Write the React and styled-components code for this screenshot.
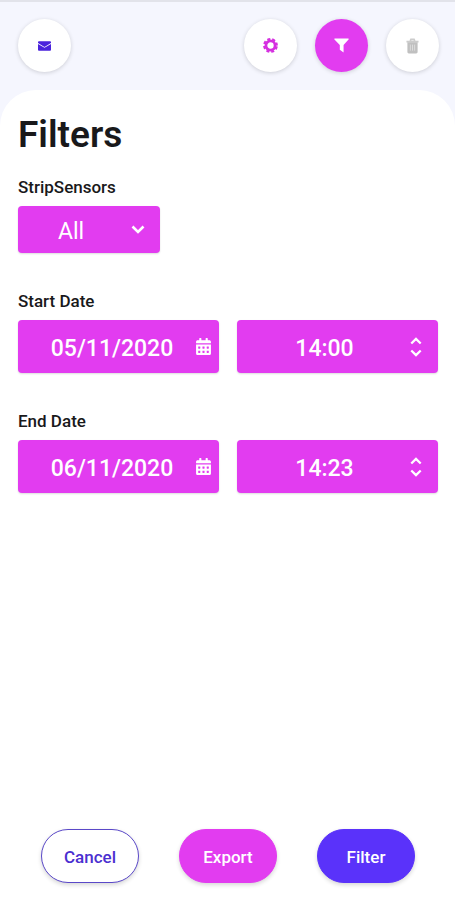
import React, { useState } from "react";
import styled, { createGlobalStyle } from "styled-components";
import { FaCalendarAlt } from "react-icons/fa";

const MAGENTA = "#e23cf0";
const INDIGO = "#5a32fa";
const INK = "#19191b";

const EnvelopeIcon = () => (
    <svg width="13" height="10" viewBox="0 0 14 10" aria-hidden="true">
        <path d="M1 0h12a1 1 0 0 1 1 1v.8L7 6 0 1.800V1a1 1 0 0 1 1-1z" fill="#4a22dc" />
        <path d="M0 2.800 7 7l7-4.200V9a1 1 0 0 1-1 1H1a1 1 0 0 1-1-1z" fill="#4a22dc" />
    </svg>
);

const GearIcon = () => (
    <svg width="15" height="15" viewBox="0 0 16 16" fill="none" stroke="#d52fe0" aria-hidden="true">
        <circle cx="8" cy="8" r="4.900" strokeWidth="3" />
        <circle cx="8" cy="8" r="6.800" strokeWidth="2.200" strokeDasharray="3.200 2.141" strokeDashoffset="-1.070" />
    </svg>
);

const FunnelIcon = () => (
    <svg width="15" height="15" viewBox="0 0 16 16" fill="#ffffff" aria-hidden="true">
        <path d="M.8.500h14.400q.9.300.3 1.200L10.200 7.500v8L6.200 12.600V7.500L.5 1.700Q-.1.800.8.500z" />
    </svg>
);

const TrashIcon = () => (
    <svg width="13" height="16" viewBox="0 0 14 17" fill="none" aria-hidden="true">
        <path d="M.5 3.800h13M4.600 3 5.300 1.300h3.400L9.400 3" stroke="#cccccc" strokeWidth="1.800" />
        <path d="M1.500 4.500h11V15q0 1.500-1.500 1.500H3q-1.500 0-1.500-1.500z" fill="#c0c0c0" />
        <path d="M4.700 7v6.500M7 7v6.500M9.300 7v6.500" stroke="#dedede" />
    </svg>
);

const Chevron = ({ width, height, up }) => (
    <svg width={width} height={height} viewBox="0 0 14 9" fill="none" aria-hidden="true">
        <path d={up ? "M1.500 7.500 7 2l5.500 5.500" : "M1.500 1.500 7 7l5.500-5.500"} stroke="#fff" strokeWidth="2.600" />
    </svg>
);

const DateTimeRow = ({ id, label, date, time }) => {
    const [day, setDay] = useState(date);
    const [hour, setHour] = useState(time);

    const shift = (step) => {
        const [h, m] = hour.split(":").map(Number);
        const total = (h * 60 + m + step + 1440) % 1440;
        const pad = (n) => String(n).padStart(2, "0");
        setHour(`${pad(Math.floor(total / 60))}:${pad(total % 60)}`);
    };

    return (
        <Group>
            <Label htmlFor={id}>{label}</Label>
            <Row>
                <Field $pad="0 8px 0 10px">
                    <FieldInput id={id} value={day} onChange={(e) => setDay(e.target.value)} />
                    <CalendarIcon aria-hidden="true" />
                </Field>
                <Field $pad="0 16px 0 2px">
                    <FieldInput
                        aria-label={`${label} time`}
                        value={hour}
                        onChange={(e) => setHour(e.target.value)}
                    />
                    <Stepper>
                        <StepButton aria-label="Later" onClick={() => shift(1)}>
                            <Chevron width={12} height={8} up />
                        </StepButton>
                        <StepButton aria-label="Earlier" onClick={() => shift(-1)}>
                            <Chevron width={12} height={8} />
                        </StepButton>
                    </Stepper>
                </Field>
            </Row>
        </Group>
    );
};

const App = () => (
    <>
        <GlobalStyle />
        <Page>
            <TopBar>
                <RoundButton aria-label="Messages"><EnvelopeIcon /></RoundButton>
                <Tools>
                    <RoundButton aria-label="Settings"><GearIcon /></RoundButton>
                    <RoundButton aria-label="Filters" $active><FunnelIcon /></RoundButton>
                    <RoundButton aria-label="Delete"><TrashIcon /></RoundButton>
                </Tools>
            </TopBar>
            <Sheet>
                <Title>Filters</Title>
                <Form>
                    <Group>
                        <Label htmlFor="sensors">StripSensors</Label>
                        <SelectBox>
                            <Select id="sensors" defaultValue="all">
                                <option value="all">All</option>
                            </Select>
                            <Caret><Chevron width={14} height={9} /></Caret>
                        </SelectBox>
                    </Group>
                    <DateTimeRow id="start" label="Start Date" date="05/11/2020" time="14:00" />
                    <DateTimeRow id="end" label="End Date" date="06/11/2020" time="14:23" />
                </Form>
                <Actions>
                    <ActionButton $bg="#ffffff" $color="#4a2fd0" $border="#5a48c8">Cancel</ActionButton>
                    <ActionButton $bg={MAGENTA} $color="#ffffff" $border={MAGENTA}>Export</ActionButton>
                    <ActionButton $bg={INDIGO} $color="#ffffff" $border={INDIGO}>Filter</ActionButton>
                </Actions>
            </Sheet>
        </Page>
    </>
);

const GlobalStyle = createGlobalStyle`
  * {
    box-sizing: border-box;
  }

  body {
    margin: 0;
    background: #f5f6fe;
    color: ${INK};
    font-family: Roboto, "Liberation Sans", sans-serif;
  }

  button, input, select {
    font-family: inherit;
  }

  svg {
    display: block;
    flex: none;
  }
`;

const Page = styled.div`
  display: flex;
  flex-direction: column;
  min-height: 100vh;
  border-top: 2px solid #e2e3ea;
`;

const TopBar = styled.header`
  display: flex;
  justify-content: space-between;
  padding: 17px 16px 18px 18px;
`;

const Tools = styled.div`
  display: flex;
  gap: 18px;
`;

const RoundButton = styled.button`
  display: flex;
  align-items: center;
  justify-content: center;
  width: 53px;
  height: 53px;
  padding: 0;
  border: none;
  border-radius: 50%;
  background: ${(p) => (p.$active ? MAGENTA : "#ffffff")};
  box-shadow: 0 1px 4px rgba(0, 0, 0, 0.16);
  cursor: pointer;
`;

const Sheet = styled.main`
  display: flex;
  flex-direction: column;
  flex: 1;
  padding: 23px 17px 17px 18px;
  border-radius: 36px 36px 0 0;
  background: #ffffff;
`;

const Title = styled.h1`
  margin: 0;
  font-size: 37px;
  font-weight: 600;
  line-height: 44px;
`;

const Form = styled.div`
  display: flex;
  flex-direction: column;
  flex: 1;
  padding-top: 20px;
`;

const Group = styled.div`
  display: flex;
  flex-direction: column;
  gap: 9px;

  & + & {
    margin-top: 38px;
  }
`;

const Label = styled.label`
  font-size: 17px;
  font-weight: 500;
  line-height: 20px;
`;

const Row = styled.div`
  display: grid;
  grid-template-columns: repeat(2, minmax(0, 1fr));
  gap: 18px;
`;

const Field = styled.div`
  display: flex;
  align-items: center;
  height: 53px;
  padding: ${(p) => p.$pad};
  border-radius: 4px;
  background: ${MAGENTA};
  box-shadow: 0 1px 2px rgba(0, 0, 0, 0.14);
`;

const FieldInput = styled.input`
  flex: 1;
  min-width: 0;
  height: 100%;
  padding: 3px 0 0;
  border: none;
  background: none;
  color: #ffffff;
  font-size: 23px;
  font-weight: 500;
  text-align: center;
`;

const CalendarIcon = styled(FaCalendarAlt)`
  width: 15px;
  height: 17px;
  color: #ffffff;
`;

const Stepper = styled.div`
  display: flex;
  flex-direction: column;
  gap: 4px;
`;

const StepButton = styled.button`
  padding: 0;
  border: none;
  background: none;
  cursor: pointer;
`;

const SelectBox = styled.div`
  position: relative;
  width: 142px;
`;

const Select = styled.select`
  display: block;
  width: 100%;
  height: 47px;
  padding: 3px 36px 0 0;
  border: none;
  border-radius: 4px;
  appearance: none;
  background: ${MAGENTA};
  box-shadow: 0 1px 2px rgba(0, 0, 0, 0.14);
  color: #ffffff;
  font-size: 23px;
  text-align: center;
  text-align-last: center;
`;

const Caret = styled.span`
  position: absolute;
  top: 0;
  right: 15px;
  bottom: 0;
  display: flex;
  align-items: center;
  pointer-events: none;
`;

const Actions = styled.div`
  display: flex;
  justify-content: center;
  gap: 40px;
`;

const ActionButton = styled.button`
  width: 98px;
  height: 54px;
  padding: 2px 0 0;
  border: 1px solid ${(p) => p.$border};
  border-radius: 27px;
  background: ${(p) => p.$bg};
  box-shadow: 0 2px 4px rgba(0, 0, 0, 0.16);
  color: ${(p) => p.$color};
  font-size: 17px;
  font-weight: 500;
  cursor: pointer;
`;

export default App;
